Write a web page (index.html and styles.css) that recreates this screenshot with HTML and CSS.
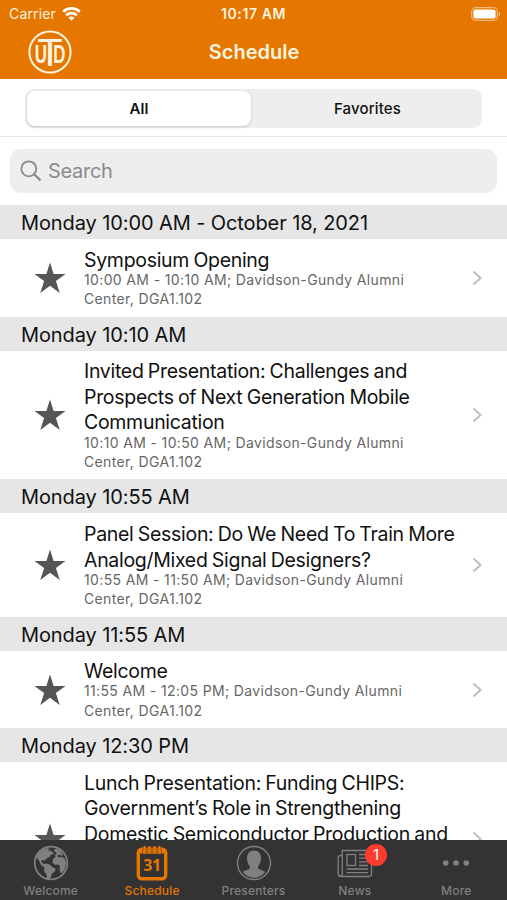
FILE: index.html
```html
<!DOCTYPE html>
<html lang="en">
<head>
    <meta charset="UTF-8">
    <meta name="viewport" content="width=device-width, initial-scale=1.0">
    <title>Schedule</title>
    <link rel="stylesheet" href="styles.css">
</head>
<body>
<svg class="defs" width="0" height="0">
    <symbol id="star" viewBox="0 0 32 32">
        <path d="M16 .5l3.600 11.600h11.900l-9.600 7 3.800 11.900-9.700-7.200-9.700 7.200 3.800-11.900-9.600-7h11.900z"/>
    </symbol>
    <symbol id="chevron" viewBox="0 0 10 16">
        <path d="M1.500 1.500l7 6.500-7 6.500" fill="none" stroke="currentColor" stroke-width="2"/>
    </symbol>
</svg>
<header class="header">
    <div class="status-bar">
        <div class="carrier">Carrier
            <svg class="wifi" width="19" height="14" viewBox="0 0 19 14" fill="none" stroke="#fff" stroke-width="2.700">
                <path d="M1.200 4.700a12 12 0 0 1 16.600 0"/>
                <path d="M4.200 8.200a7.700 7.700 0 0 1 10.600 0"/>
                <path d="M9.500 13.800L6.500 10.800a4.500 4.500 0 0 1 6 0z" fill="#fff" stroke="none"/>
            </svg>
        </div>
        <div class="clock">10:17 AM</div>
        <svg class="battery" width="30" height="14" viewBox="0 0 30 14">
            <rect x=".7" y=".7" width="25.600" height="12.600" rx="3.800" fill="none" stroke="#f2b87c" stroke-width="1.200"/>
            <rect x="2.400" y="2.400" width="22.200" height="9.200" rx="2.200" fill="#fff"/>
            <path d="M27.700 4.700c2 .6 2 4 0 4.600z" fill="#f2b87c"/>
        </svg>
    </div>
    <div class="nav-bar">
        <svg class="logo" width="44" height="44" viewBox="0 0 44 44">
            <circle cx="22" cy="22" r="20.600" fill="none" stroke="#fff3df" stroke-width="2"/>
            <g class="logo-text">
                <text transform="translate(12.800 32.500) scale(.65 1)">U</text>
                <text transform="translate(31.400 32.500) scale(.65 1)">D</text>
                <text class="logo-t" transform="translate(22 36) scale(1.100 1)">T</text>
            </g>
        </svg>
        <h1>Schedule</h1>
    </div>
</header>
<div class="filter">
    <div class="segments">
        <button class="segment selected">All</button>
        <button class="segment">Favorites</button>
    </div>
</div>
<div class="search">
    <div class="search-box">
        <svg width="22" height="22" viewBox="0 0 22 22" fill="none" stroke="#8a8a8d" stroke-width="1.800">
            <circle cx="8.800" cy="8.800" r="7.500"/>
            <path d="M14.200 14.200l6.300 6.200" stroke-width="2.200"/>
        </svg>
        <span>Search</span>
    </div>
</div>
<main class="schedule">
    <h2>Monday 10:00 AM - October 18, 2021</h2>
    <div class="event">
        <svg class="star"><use href="#star"/></svg>
        <div class="event-info">
            <h3>Symposium Opening</h3>
            <p>10:00 AM - 10:10 AM; Davidson-Gundy Alumni<br>Center, DGA1.102</p>
        </div>
        <svg class="chevron"><use href="#chevron"/></svg>
    </div>
    <h2>Monday 10:10 AM</h2>
    <div class="event">
        <svg class="star"><use href="#star"/></svg>
        <div class="event-info">
            <h3>Invited Presentation: Challenges and<br>Prospects of Next Generation Mobile<br>Communication</h3>
            <p>10:10 AM - 10:50 AM; Davidson-Gundy Alumni<br>Center, DGA1.102</p>
        </div>
        <svg class="chevron"><use href="#chevron"/></svg>
    </div>
    <h2>Monday 10:55 AM</h2>
    <div class="event">
        <svg class="star"><use href="#star"/></svg>
        <div class="event-info">
            <h3>Panel Session: Do We Need To Train More<br>Analog/Mixed Signal Designers?</h3>
            <p>10:55 AM - 11:50 AM; Davidson-Gundy Alumni<br>Center, DGA1.102</p>
        </div>
        <svg class="chevron"><use href="#chevron"/></svg>
    </div>
    <h2>Monday 11:55 AM</h2>
    <div class="event">
        <svg class="star"><use href="#star"/></svg>
        <div class="event-info">
            <h3>Welcome</h3>
            <p>11:55 AM - 12:05 PM; Davidson-Gundy Alumni<br>Center, DGA1.102</p>
        </div>
        <svg class="chevron"><use href="#chevron"/></svg>
    </div>
    <h2>Monday 12:30 PM</h2>
    <div class="event event-last">
        <svg class="star"><use href="#star"/></svg>
        <div class="event-info">
            <h3>Lunch Presentation: Funding CHIPS:<br>Government’s Role in Strengthening<br>Domestic Semiconductor Production and</h3>
        </div>
        <svg class="chevron"><use href="#chevron"/></svg>
    </div>
</main>
<nav class="tab-bar">
    <div class="tab">
        <svg width="36" height="36" viewBox="0 0 36 36">
            <circle cx="18" cy="18" r="16.300" fill="none" stroke="currentColor" stroke-width="1.800"/>
            <path fill="currentColor" d="M3 12C5.500 7 9.500 4 14 3l3 1-2.500 2 3-.5 2 1.500 1.500 2-3 .5-1.500 2.500-3 1.500-1.500 2-2.500-.5-1.500 1.500 1.500 1.500 2 1 2.500-.5 3.500 1.500 1.500 2 3.500 1.500-.5 3-3 2-1 3.500-2.500 3-1.500-.5-.5-5-2.500-3.500.5-3.500-3.500-2.500-2-4.500zM20.500 5.500l2.500-2 4 2 3.500 4.500-2 .5-2-1-2.500 1.500 2.500 1.500 3-.5 2.500 2 1 3.500-1 6-2.500 4-2 .5-1-3.500.5-3.500-2-1.500-3 .5-2.500-2.500.5-3.500 2.500-2-.5-2 2-1.500-1-1z"/>
        </svg>
        <span>Welcome</span>
    </div>
    <div class="tab active">
        <svg width="36" height="36" viewBox="0 0 36 36">
            <rect x="4.300" y="4.300" width="27.400" height="29.400" rx="3.500" fill="none" stroke="currentColor" stroke-width="3.400"/>
            <path d="M4 4h28v4.500H4z" fill="currentColor"/>
            <path d="M10.500 2v6M15.500 2v6M20.500 2v6M25.500 2v6" stroke="#333" stroke-width="3.600"/>
            <path d="M10.500 2.300v5.400M15.500 2.300v5.400M20.500 2.300v5.400M25.500 2.300v5.400" stroke="currentColor" stroke-width="2.700" stroke-linecap="round"/>
            <text x="18" y="26" class="cal-day">31</text>
        </svg>
        <span>Schedule</span>
    </div>
    <div class="tab">
        <svg width="36" height="36" viewBox="0 0 36 36">
            <circle cx="18" cy="18" r="16.500" fill="none" stroke="currentColor" stroke-width="1.400"/>
            <path fill="currentColor" d="M18 5.500c4.600 0 7 3.200 7 7.500 0 3.200-1 6-2.800 8.200-.5 1.600.2 2.800 1.800 3.400l5.300 2.100c-2.700 3.700-6.700 6-11.300 6s-8.600-2.300-11.300-6l5.300-2.100c1.600-.6 2.300-1.800 1.800-3.400C12 19 11 16.200 11 13c0-4.300 2.400-7.500 7-7.500z"/>
        </svg>
        <span>Presenters</span>
    </div>
    <div class="tab">
        <svg width="36" height="36" viewBox="0 0 36 36" fill="none" stroke="currentColor" stroke-width="1.300">
            <path d="M5.300 10.500H3.200a2 2 0 0 0-2 2v16a3 3 0 0 0 3 3h28a2.300 2.300 0 0 0 2.300-2.300V5.500H5.300v23.300a2 2 0 0 1-3 1.800"/>
            <rect x="10" y="9.500" width="8.500" height="11"/>
            <path d="M22 9.500h9M22 13.200h9M22 16.900h9M22 20.500h9M9.500 24h21.500M9.500 27.600h21.500"/>
        </svg>
        <span>News</span>
        <div class="badge">1</div>
    </div>
    <div class="tab">
        <svg width="36" height="36" viewBox="0 0 36 36" fill="currentColor">
            <circle cx="7.700" cy="18" r="2.800"/>
            <circle cx="18" cy="18" r="2.800"/>
            <circle cx="28.300" cy="18" r="2.800"/>
        </svg>
        <span>More</span>
    </div>
</nav>
</body>
</html>
```
FILE: styles.css
```css
* {
    box-sizing: border-box;
}
body {
    margin: 0;
    height: 900px;
    overflow: hidden;
    display: flex;
    flex-direction: column;
    font-family: Inter, "Liberation Sans", sans-serif;
    background-color: #fff;
    color: #111;
}
h1, h2, h3, p {
    margin: 0;
    font-weight: 400;
}
.defs {
    display: block;
    position: absolute;
}
.header {
    flex: none;
    height: 79px;
    background-color: #e57600;
    color: #fff3df;
}
.status-bar {
    height: 27px;
    padding: 0 6px 0 9px;
    display: grid;
    grid-template-columns: 1fr auto 1fr;
    align-items: center;
    font-size: 14px;
}
.carrier {
    display: flex;
    align-items: center;
    gap: 6px;
    letter-spacing: 0.15px;
}
.clock {
    font-weight: 600;
    letter-spacing: 0.6px;
    margin-right: 3px;
}
.battery {
    justify-self: end;
}
.nav-bar {
    height: 50px;
    padding: 0 27px 0 28px;
    display: grid;
    grid-template-columns: 1fr auto 1fr;
    align-items: center;
}
.nav-bar h1 {
    font-size: 20px;
    font-weight: 600;
}
.logo-text {
    fill: #fff3df;
    font-family: "Liberation Sans", sans-serif;
    font-size: 26px;
    font-weight: 700;
    text-anchor: middle;
}
.logo-t {
    font-size: 38px;
    font-weight: 400;
    stroke: #e57600;
    stroke-width: 1.5px;
    paint-order: stroke;
}
.filter {
    flex: none;
    height: 58px;
    padding: 10px 25px 0;
    border-bottom: 1px solid #e9e9e9;
}
.segments {
    display: flex;
    height: 39px;
    padding: 2px;
    border-radius: 9px;
    background-color: #eee;
}
.segment {
    flex: 1;
    border: none;
    background: none;
    border-radius: 8px;
    padding: 0 0 0 4px;
    font-family: inherit;
    font-size: 15px;
    font-weight: 500;
    letter-spacing: 0.15px;
    color: #111;
}
.segment.selected {
    flex: 0 0 224px;
    padding: 0;
    background-color: #fff;
    font-weight: 600;
    box-shadow: 0 1px 3px rgba(0, 0, 0, 0.18);
}
.search {
    flex: none;
    height: 68px;
    padding: 12px 10px;
}
.search-box {
    height: 44px;
    border-radius: 11px;
    background-color: #eee;
    display: flex;
    align-items: center;
    padding-left: 10px;
    gap: 6px;
    font-size: 20px;
    letter-spacing: -0.3px;
    color: #8a8a8d;
}
.schedule {
    flex: 1;
    min-height: 0;
    overflow: hidden;
}
.schedule h2 {
    height: 34px;
    padding-left: 21px;
    line-height: 36px;
    font-size: 20px;
    letter-spacing: -0.1px;
    background-color: #e6e6e6;
}
.event {
    display: flex;
    align-items: center;
    padding: 8.6px 25px 7.7px 34px;
}
.event-info {
    flex: 1;
    min-width: 0;
    white-space: nowrap;
}
.event h3 {
    font-size: 19.5px;
    line-height: 25.6px;
    letter-spacing: -0.3px;
    word-spacing: -0.9px;
    margin-bottom: -3.3px;
}
.event p {
    font-size: 14px;
    line-height: 19.5px;
    letter-spacing: 0.36px;
    color: #666;
}
.event-last {
    height: 153px;
    align-items: flex-start;
}
.event-last .star, .event-last .chevron {
    align-self: center;
}
.star {
    flex: none;
    width: 32px;
    height: 32px;
    margin-right: 18px;
    fill: #555;
}
.chevron {
    flex: none;
    width: 10px;
    height: 16px;
    color: #bfbfc1;
}
.tab-bar {
    flex: none;
    height: 60px;
    display: flex;
    background-color: #333;
    color: #808080;
}
.tab {
    flex: 1;
    position: relative;
    display: flex;
    flex-direction: column;
    align-items: center;
    padding-top: 5px;
    font-size: 12px;
    font-weight: 500;
    line-height: 20px;
    letter-spacing: 0.2px;
}
.tab svg {
    flex: none;
}
.tab.active {
    color: #e57600;
}
.cal-day {
    fill: currentColor;
    font-family: "Open Sans", sans-serif;
    font-size: 16px;
    font-weight: 700;
    letter-spacing: -0.5px;
    text-anchor: middle;
}
.badge {
    position: absolute;
    top: 4px;
    left: 61px;
    width: 22px;
    height: 22px;
    border-radius: 50%;
    background-color: #ff3b30;
    color: #fff;
    font-size: 15px;
    font-weight: 400;
    line-height: 22px;
    text-align: center;
}
```
